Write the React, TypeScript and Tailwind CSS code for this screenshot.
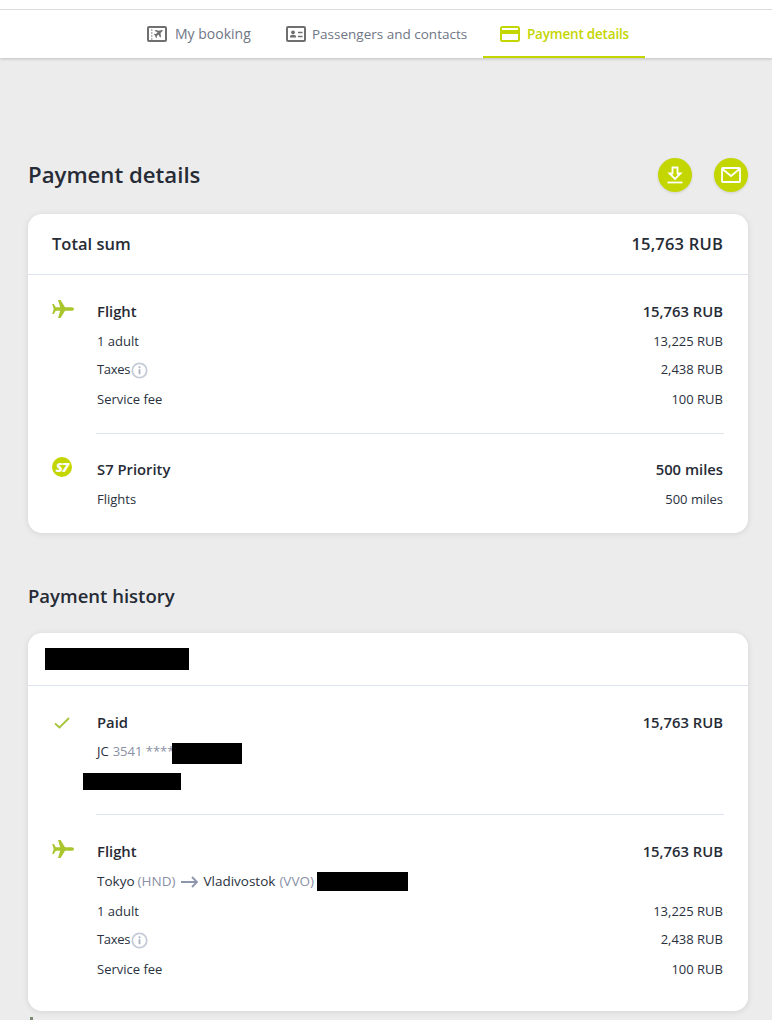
import type { ReactNode } from "react"

const font = { fontFamily: '"Open Sans", "Noto Sans", sans-serif' }

function Plane() {
    return (
        <svg width="22" height="18" viewBox="0 0 22 18" className="block">
            <path d="M6 0 L8.6 0 L13 7.2 L19.5 7.2 C21 7.2 22 8 22 9 C22 10 21 10.8 19.5 10.8 L13 10.8 L8.6 18 L6 18 L8.2 10.8 L3.8 10.8 L1.8 14 L0.2 14 L1.7 9 L0.2 4 L1.8 4 L3.8 7.2 L8.2 7.2 Z" fill="#a9c62d" />
        </svg>
    )
}

function Check() {
    return (
        <svg width="16" height="12" viewBox="0 0 16 12" className="block">
            <path d="M1 6.5 L5.5 10.5 L15 1" fill="none" stroke="#a5c43a" strokeWidth="1.8" />
        </svg>
    )
}

function S7Logo() {
    return (
        <div className="w-5 h-5 mt-[-1px] rounded-full bg-[#c4d600] flex items-center justify-center text-white text-[13px] font-extrabold italic leading-none tracking-[-1px]">
            S7
        </div>
    )
}

function Info() {
    return (
        <svg width="17" height="17" viewBox="0 0 17 17" className="block">
            <circle cx="8.5" cy="8.5" r="7.2" fill="none" stroke="#c5ccd8" strokeWidth="1.8" />
            <rect x="7.6" y="7.2" width="1.8" height="5" fill="#a9b2c2" />
            <rect x="7.6" y="4.4" width="1.8" height="1.8" fill="#a9b2c2" />
        </svg>
    )
}

function Row({ left, right, h = "h-[30px] pt-[1px]" }: { left: ReactNode; right?: string; h?: string }) {
    return (
        <div className={`flex items-center justify-between text-[13px] text-[#2a3140] ${h}`}>
            <div className="flex items-center">{left}</div>
            {right && <div>{right}</div>}
        </div>
    )
}

function HeadRow({ icon, title, right }: { icon: ReactNode; title: string; right: string }) {
    return (
        <div className="relative flex items-center justify-between h-[30px] text-[14.8px] font-semibold text-[#262b36]">
            <div className="absolute left-[-45px] top-[4px]">{icon}</div>
            <div>{title}</div>
            <div>{right}</div>
        </div>
    )
}

function Taxes() {
    return (
        <>
            <span className="tracking-[-0.3px]">Taxes</span>
            <span className="ml-[1px]"><Info /></span>
        </>
    )
}

function Tab({ icon, label, w, gap, size }: { icon: ReactNode; label: string; w: string; gap: string; size: string }) {
    return (
        <div className={`h-[48px] flex items-center font-medium text-[#6f7685] ${w} ${gap} ${size}`}>
            {icon}
            <span>{label}</span>
        </div>
    )
}

function CircleBtn({ children }: { children: ReactNode }) {
    return (
        <div className="w-[34px] h-[34px] rounded-full bg-[#c4d600] flex items-center justify-center shadow-[0_1px_3px_rgba(0,0,0,0.12)]">
            {children}
        </div>
    )
}

export default function App() {
    return (
        <div className="h-[1020px] overflow-hidden bg-[#ececec]" style={font}>
            {/* Top nav */}
            <div className="h-[58px] bg-white pt-[9px] shadow-[0_1px_3px_rgba(0,0,0,0.2)]">
                <div className="h-px bg-[#dcdcdc]" />
                <div className="flex pl-[147px]">
                    <Tab
                        w="w-[139px] pb-[1px]"
                        gap="gap-[8px]"
                        size="text-[14px]"
                        label="My booking"
                        icon={
                            <svg width="20" height="16" viewBox="0 0 20 16">
                                <rect x="1" y="1" width="18" height="14" rx="1" fill="none" stroke="#6f6f6f" strokeWidth="2" />
                                <path d="M4 4h1.5M4 7h1.5M4 10h1.5M4 13h1.5" stroke="#6f6f6f" strokeWidth="1.2" />
                                <path d="M14.5 4 L16 4.5 L13.5 7 L14 11 L13 11.5 L11.5 8.5 L9.8 10 L10 11.5 L9 12 L8 9.5 L6.8 8.2 L7.5 7.7 L9 8 L10.6 6.4 L7.7 4.8 L8.4 4.1 L12 4.8 Z" fill="#6f6f6f" />
                            </svg>
                        }
                    />
                    <Tab
                        w="w-[197px]"
                        gap="gap-[6px]"
                        size="text-[13.5px]"
                        label="Passengers and contacts"
                        icon={
                            <svg width="20" height="16" viewBox="0 0 20 16">
                                <rect x="1" y="1" width="18" height="14" rx="1" fill="none" stroke="#6f6f6f" strokeWidth="2" />
                                <circle cx="7" cy="6.3" r="1.9" fill="#6f6f6f" />
                                <path d="M3.8 11.5 C3.8 9.5 5 8.8 7 8.8 C9 8.8 10.2 9.5 10.2 11.5 Z" fill="#6f6f6f" />
                                <path d="M12 6.5h4.5M12 10.5h4.5" stroke="#6f6f6f" strokeWidth="1.6" />
                            </svg>
                        }
                    />
                    <div className="w-[162px] h-[48px] pt-[2px] pl-[17px] flex items-center gap-[7px] border-b-2 border-[#c4d600] text-[13.5px] font-semibold tracking-[-0.2px] text-[#c4d600]">
                        <svg width="20" height="16" viewBox="0 0 20 16">
                            <rect x="1" y="1" width="18" height="14" rx="1.5" fill="none" stroke="#c4d600" strokeWidth="2" />
                            <rect x="1" y="4" width="18" height="4" fill="#c4d600" />
                        </svg>
                        <span>Payment details</span>
                    </div>
                </div>
            </div>

            <div className="px-[28px] w-[776px]">
                {/* Title */}
                <div className="mt-[100px] h-[34px] flex items-center justify-between">
                    <h1 className="text-[22.2px] font-semibold text-[#262b36]">Payment details</h1>
                    <div className="flex gap-[22px]">
                        <CircleBtn>
                            <svg width="20" height="20" viewBox="0 0 20 20">
                                <path d="M7.5 2.5h5v6h3L10 14 4.5 8.5h3z" fill="none" stroke="#fff" strokeWidth="1.8" />
                                <path d="M2.5 17.5h15" stroke="#fff" strokeWidth="1.8" />
                            </svg>
                        </CircleBtn>
                        <CircleBtn>
                            <svg width="20" height="16" viewBox="0 0 20 16">
                                <rect x="1" y="1" width="18" height="14" rx="1" fill="none" stroke="#fff" strokeWidth="1.8" />
                                <path d="M1.5 2 L10 9 L18.5 2" fill="none" stroke="#fff" strokeWidth="1.8" />
                            </svg>
                        </CircleBtn>
                    </div>
                </div>

                {/* Total card */}
                <div className="mt-[22px] w-[720px] h-[319px] bg-white rounded-[14px] shadow-[0_1px_6px_rgba(0,0,0,0.1)]">
                    <div className="h-[61px] pl-[24px] pr-[25px] flex items-center justify-between border-b border-[#dde3ee] text-[16.5px] font-semibold text-[#262b36]">
                        <div>Total sum</div>
                        <div className="tracking-[0.2px]">15,763 RUB</div>
                    </div>
                    <div className="pl-[69px] pr-[25px] pt-[21px]">
                        <HeadRow icon={<Plane />} title="Flight" right="15,763 RUB" />
                        <Row left="1 adult" right="13,225 RUB" />
                        <Row left={<Taxes />} right="2,438 RUB" h="h-[28px]" />
                        <Row left="Service fee" right="100 RUB" />
                        <div className="mt-[19px] mb-[20px] ml-[-1px] mr-[-1px] h-px bg-[#dfe3ea]" />
                        <HeadRow icon={<S7Logo />} title="S7 Priority" right="500 miles" />
                        <Row left="Flights" right="500 miles" />
                    </div>
                </div>

                <h2 className="mt-[48px] h-[30px] leading-[30px] text-[18.5px] font-semibold text-[#262b36]">Payment history</h2>

                {/* History card */}
                <div className="mt-[22px] w-[720px] h-[378px] bg-white rounded-[14px] shadow-[0_1px_6px_rgba(0,0,0,0.1)]">
                    <div className="h-[53px] pl-[17px] pt-[15px] border-b border-[#dde3ee]">
                        <div className="w-[144px] h-[22px] bg-black" />
                    </div>
                    <div className="pl-[69px] pr-[25px] pt-[21px]">
                        <HeadRow icon={<div className="pl-[2px] pt-[6px]"><Check /></div>} title="Paid" right="15,763 RUB" />
                        <Row
                            h="h-[30px]"
                            left={
                                <>
                                    <span>JC</span>
                                    <span className="ml-[4px] text-[#8a90a5]">3541 ****</span>
                                    <span className="ml-[-2px] mt-[2px] w-[70px] h-[21px] bg-black" />
                                </>
                            }
                        />
                        <div className="ml-[-14px] mt-[6px] w-[98px] h-[17px] bg-black" />
                        <div className="mt-[24px] mb-[21px] ml-[-1px] mr-[-1px] h-px bg-[#dde3ee]" />
                        <HeadRow icon={<Plane />} title="Flight" right="15,763 RUB" />
                        <Row
                            h="h-[30px]"
                            left={
                                <div className="flex items-center text-[13.5px]">
                                    <span>Tokyo</span>
                                    <span className="ml-[3px] text-[#8a90a5]">(HND)</span>
                                    <svg width="18" height="12" viewBox="0 0 18 12" className="ml-[6px] mr-[4px] mt-[2px]">
                                        <path d="M0 6h16M11 1l5 5-5 5" fill="none" stroke="#8e96ad" strokeWidth="1.8" />
                                    </svg>
                                    <span>Vladivostok</span>
                                    <span className="ml-[4px] text-[#8a90a5]">(VVO)</span>
                                    <span className="ml-[3px] w-[91px] h-[19px] bg-black" />
                                </div>
                            }
                        />
                        <Row left="1 adult" right="13,225 RUB" />
                        <Row left={<Taxes />} right="2,438 RUB" h="h-[28px]" />
                        <Row left="Service fee" right="100 RUB" />
                    </div>
                </div>
                <div className="mt-[6px] ml-[2px] w-[3px] h-[3px] bg-[#7a8a70]" />
            </div>
        </div>
    )
}
